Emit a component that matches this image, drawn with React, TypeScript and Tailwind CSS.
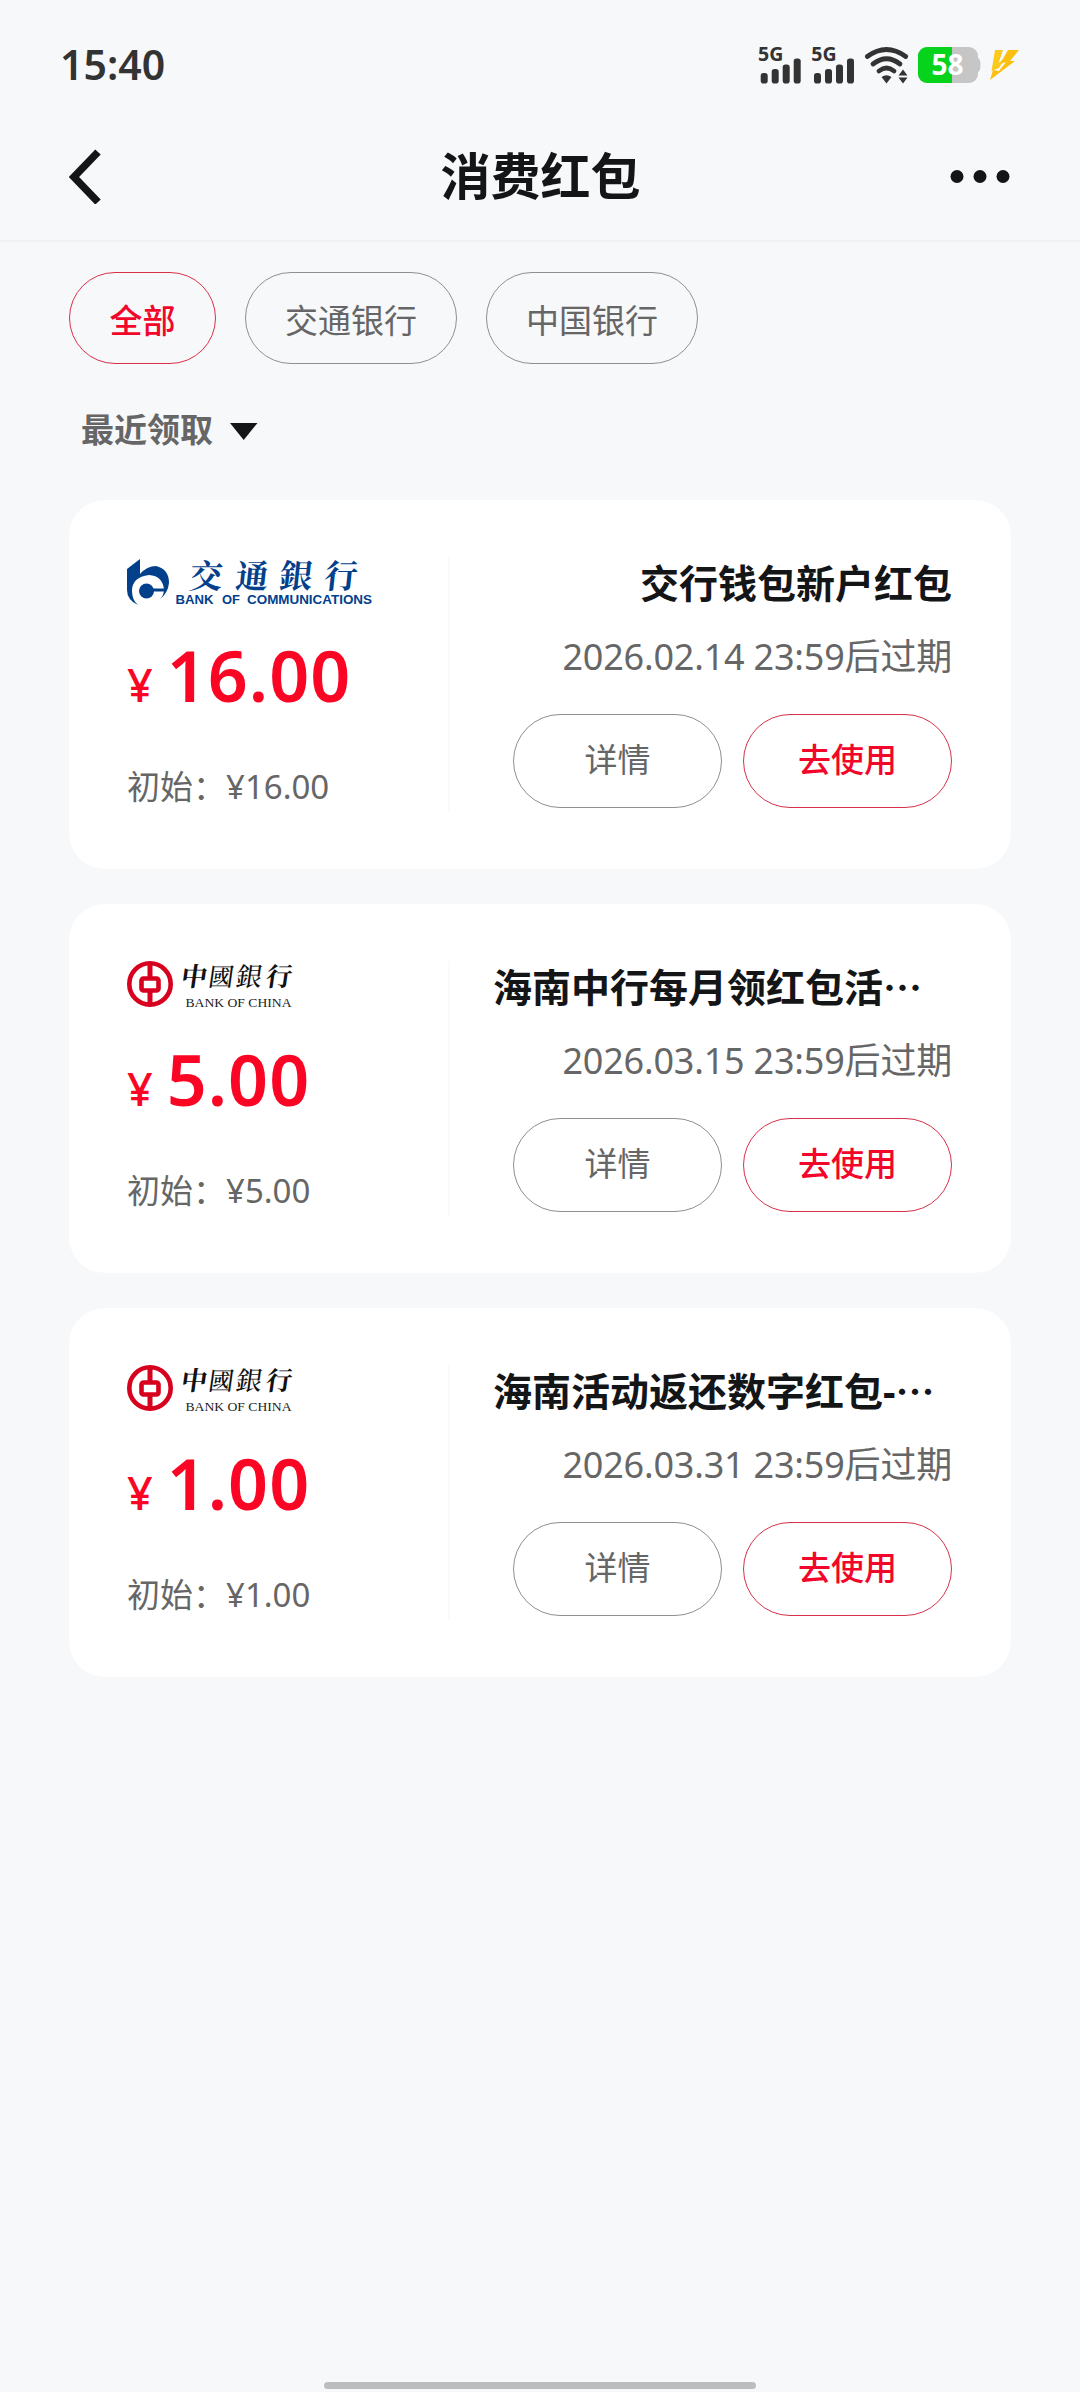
import type { ReactNode } from "react"

type RedPacket = {
    bank: "bocom" | "boc"
    amount: string
    title: string
    expires: string
}

const packets: RedPacket[] = [
    { bank: "bocom", amount: "16.00", title: "交行钱包新户红包", expires: "2026.02.14 23:59后过期" },
    { bank: "boc", amount: "5.00", title: "海南中行每月领红包活⋯", expires: "2026.03.15 23:59后过期" },
    { bank: "boc", amount: "1.00", title: "海南活动返还数字红包-⋯", expires: "2026.03.31 23:59后过期" },
]

export default function App() {
    return (
        <div className="flex flex-col w-[1080px] h-[2392px] bg-[#f7f8fa] text-[#666666] font-['Noto_Sans','Noto_Sans_CJK_SC',sans-serif]">
            <StatusBar/>
            <Header/>
            <Filters/>
            <SortBar/>
            <div className="flex flex-col gap-[35px] px-[69px] mt-[39px]">
                {packets.map((packet) => (
                    <PacketCard key={packet.expires} packet={packet}/>
                ))}
            </div>
            <div className="w-[432px] h-[7px] mt-auto mb-[3px] mx-auto rounded-full bg-[#bcbdbf]"/>
        </div>
    )
}

function StatusBar() {
    return (
        <div className="flex items-center justify-between h-[130px] px-[60px] text-[#333333]">
            <span className="pb-[2px] text-[41px] leading-none font-semibold">15:40</span>
            <svg className="overflow-visible" width="262" height="54" viewBox="0 -8 262 54">
                <Signal x={0}/>
                <Signal x={53.3}/>
                <g fill="none" stroke="#333333" strokeWidth="4.8" strokeLinecap="round">
                    <path d="M109.300 10.500Q128.500 -3.500 147.700 10.500"/>
                    <path d="M115 18Q128.500 7.500 142 18"/>
                    <path d="M121 25Q128.500 19 136 25"/>
                </g>
                <path d="M128.500 37.500L123.500 31Q128.500 27.500 133.500 31Z" fill="#333333"/>
                <path d="M145 23.500L149.500 29.500H140.500ZM145 37.500L140.500 31.500H149.500Z" fill="#333333"/>
                <rect x="160" y="1" width="60" height="36" rx="9" fill="#c6c6c6"/>
                <path d="M169 1H194V37H169A9 9 0 0 1 160 28V10A9 9 0 0 1 169 1Z" fill="#06d31c"/>
                <path d="M220 12Q222.500 13 222.500 19T220 26Z" fill="#c6c6c6"/>
                <text x="189.500" y="29" textAnchor="middle" fontSize="28" fontWeight="700" fill="#ffffff">58</text>
                <path d="M237 4H245L240.500 17L247 12L241 22L233.500 25Z" fill="#fcc91d"/>
                <path d="M250 4H261L252 15H257L232 34L235 24L241 25L248 16L242 18Z" fill="#fbc00f"/>
            </svg>
        </div>
    )
}

function Signal({ x }: { x: number }) {
    return (
        <g transform={`translate(${x} 0)`} fill="#333333">
            <text x="0" y="15" fontSize="19.500" fontWeight="700">5G</text>
            <rect x="2.700" y="27" width="7" height="10.500" rx="2.800"/>
            <rect x="13.700" y="23" width="7" height="14.500" rx="2.800"/>
            <rect x="24.700" y="18.500" width="7" height="19" rx="2.800"/>
            <rect x="35.700" y="12.500" width="7" height="25" rx="2.800"/>
        </g>
    )
}

function Header() {
    return (
        <div className="flex items-center justify-between h-[112px] pl-[69px] pr-[68px] pb-[18px] border-b-2 border-[#f0f1f3] text-[#141517]">
            <svg width="62" height="56" viewBox="0 0 62 56" fill="none" stroke="currentColor" strokeWidth="7.500">
                <path d="M29 4L5 29L29 54"/>
            </svg>
            <h1 className="text-[50px] leading-none font-bold">消费红包</h1>
            <svg width="62" height="14" viewBox="0 0 62 14" fill="currentColor">
                <circle cx="7" cy="7.500" r="6.500"/>
                <circle cx="30" cy="7.500" r="6.500"/>
                <circle cx="53" cy="7.500" r="6.500"/>
            </svg>
        </div>
    )
}

function Filters() {
    return (
        <div className="flex gap-[29px] px-[69px] mt-[30px]">
            <Pill className="h-[92px] px-[39.5px] pt-[4px] border-[#d9304a] text-[#f2062a] font-medium">全部</Pill>
            <Pill className="h-[92px] px-[39px] pt-[4px] border-[#8f8f91]">交通银行</Pill>
            <Pill className="h-[92px] px-[39px] pt-[4px] border-[#8f8f91]">中国银行</Pill>
        </div>
    )
}

function Pill({ className, children }: { className: string, children: ReactNode }) {
    return (
        <button className={`flex items-center justify-center rounded-full border text-[33px] leading-none ${className}`}>
            {children}
        </button>
    )
}

function SortBar() {
    return (
        <div className="flex items-center gap-[17px] h-[66px] pl-[81px] mt-[31px]">
            <span className="pt-[2px] text-[33px] leading-none font-bold">最近领取</span>
            <svg className="mt-[7px]" width="28" height="18" viewBox="0 0 28 18" fill="#141517">
                <path d="M0 0H27.500L13.700 17Z"/>
            </svg>
        </div>
    )
}

function PacketCard({ packet }: { packet: RedPacket }) {
    return (
        <div className="flex h-[369px] rounded-[36px] bg-white py-[57px] pr-[59px]">
            <div className="flex flex-col w-[381px] h-[255px] pl-[58px] border-r-2 border-[#fafafb]">
                {packet.bank === "bocom" ? <BocomLogo/> : <BocLogo/>}
                <div className="flex items-baseline gap-[14px] mt-[31px] text-[#fb0525] leading-none">
                    <span className="text-[45px] font-medium">¥</span>
                    <span className="text-[70px] font-semibold tracking-[1px]">{packet.amount}</span>
                </div>
                <p className="mt-[60px] text-[33px] leading-none whitespace-nowrap">初始：¥{packet.amount}</p>
            </div>
            <div className="flex flex-col flex-1 items-end">
                <div className="w-[459px] mt-[6px]">
                    <h2 className={`text-[39px] leading-none font-bold text-[#141517] whitespace-nowrap ${packet.bank === "bocom" ? "text-right" : ""}`}>{packet.title}</h2>
                </div>
                <p className="mt-[37px] text-[36px] leading-none tracking-[-0.2px] whitespace-nowrap">{packet.expires}</p>
                <div className="flex gap-[21px] mt-[39px]">
                    <Pill className="w-[209px] h-[94px] pb-[4px] border-[#8f8f91]">详情</Pill>
                    <Pill className="w-[209px] h-[94px] pb-[4px] border-[#d9304a] text-[#f2062a] font-medium">去使用</Pill>
                </div>
            </div>
        </div>
    )
}

function BocomLogo() {
    return (
        <svg className="shrink-0 overflow-visible" width="250" height="52" viewBox="0 0 250 52" fill="#03408c">
            <path d="M0 12L13 2V17Q20 9 29 9Q42 12 42 26Q41 36 33 42Q37 38 37 33Q36 19 22 18Q5 20 5 34Q5 43 11 48Q0 43 0 33Z"/>
            <circle cx="19.500" cy="34" r="7.500"/>
            <path d="M25 31.500H37V34.500H25Z"/>
            <g className="font-['Noto_Serif_CJK_SC','Noto_Sans_CJK_TC',sans-serif]" fontSize="33" fontWeight="700" textAnchor="middle">
                <text x="0" y="0" transform="translate(78 31) skewX(-6)">交</text>
                <text x="0" y="0" transform="translate(124 31) skewX(-6)">通</text>
                <text x="0" y="0" transform="translate(168 31) skewX(-6)">銀</text>
                <text x="0" y="0" transform="translate(213 31) skewX(-6)">行</text>
            </g>
            <g fontSize="12" fontWeight="700" className="font-['Liberation_Sans',sans-serif]">
                <text x="48.500" y="47" textLength="38" lengthAdjust="spacingAndGlyphs">BANK</text>
                <text x="95" y="47" textLength="18" lengthAdjust="spacingAndGlyphs">OF</text>
                <text x="120" y="47" textLength="125" lengthAdjust="spacingAndGlyphs">COMMUNICATIONS</text>
            </g>
        </svg>
    )
}

function BocLogo() {
    return (
        <svg className="shrink-0 overflow-visible" width="250" height="52" viewBox="0 0 250 52">
            <g fill="none" stroke="#d7001f">
                <circle cx="23" cy="23" r="20.700" strokeWidth="4.600"/>
                <rect x="14.500" y="17.500" width="17" height="12" rx="2" strokeWidth="4.600"/>
                <path d="M23 2V17M23 30V44" strokeWidth="5"/>
            </g>
            <g className="font-['Noto_Serif_CJK_SC','Noto_Sans_CJK_TC',sans-serif]" fontSize="26" fontWeight="700" fill="#111111" textAnchor="middle">
                <text x="0" y="0" transform="translate(66 25) skewX(-8)">中</text>
                <text x="0" y="0" transform="translate(93 25) skewX(-8)" fontSize="25" fontWeight="500">國</text>
                <text x="0" y="0" transform="translate(121 25) skewX(-8)" fontWeight="500">銀</text>
                <text x="0" y="0" transform="translate(151 25) skewX(-8)">行</text>
            </g>
            <text x="58.500" y="45.500" fontSize="13.500" textLength="106" lengthAdjust="spacingAndGlyphs" fill="#222222" className="font-['Liberation_Serif',serif]">BANK OF CHINA</text>
        </svg>
    )
}
